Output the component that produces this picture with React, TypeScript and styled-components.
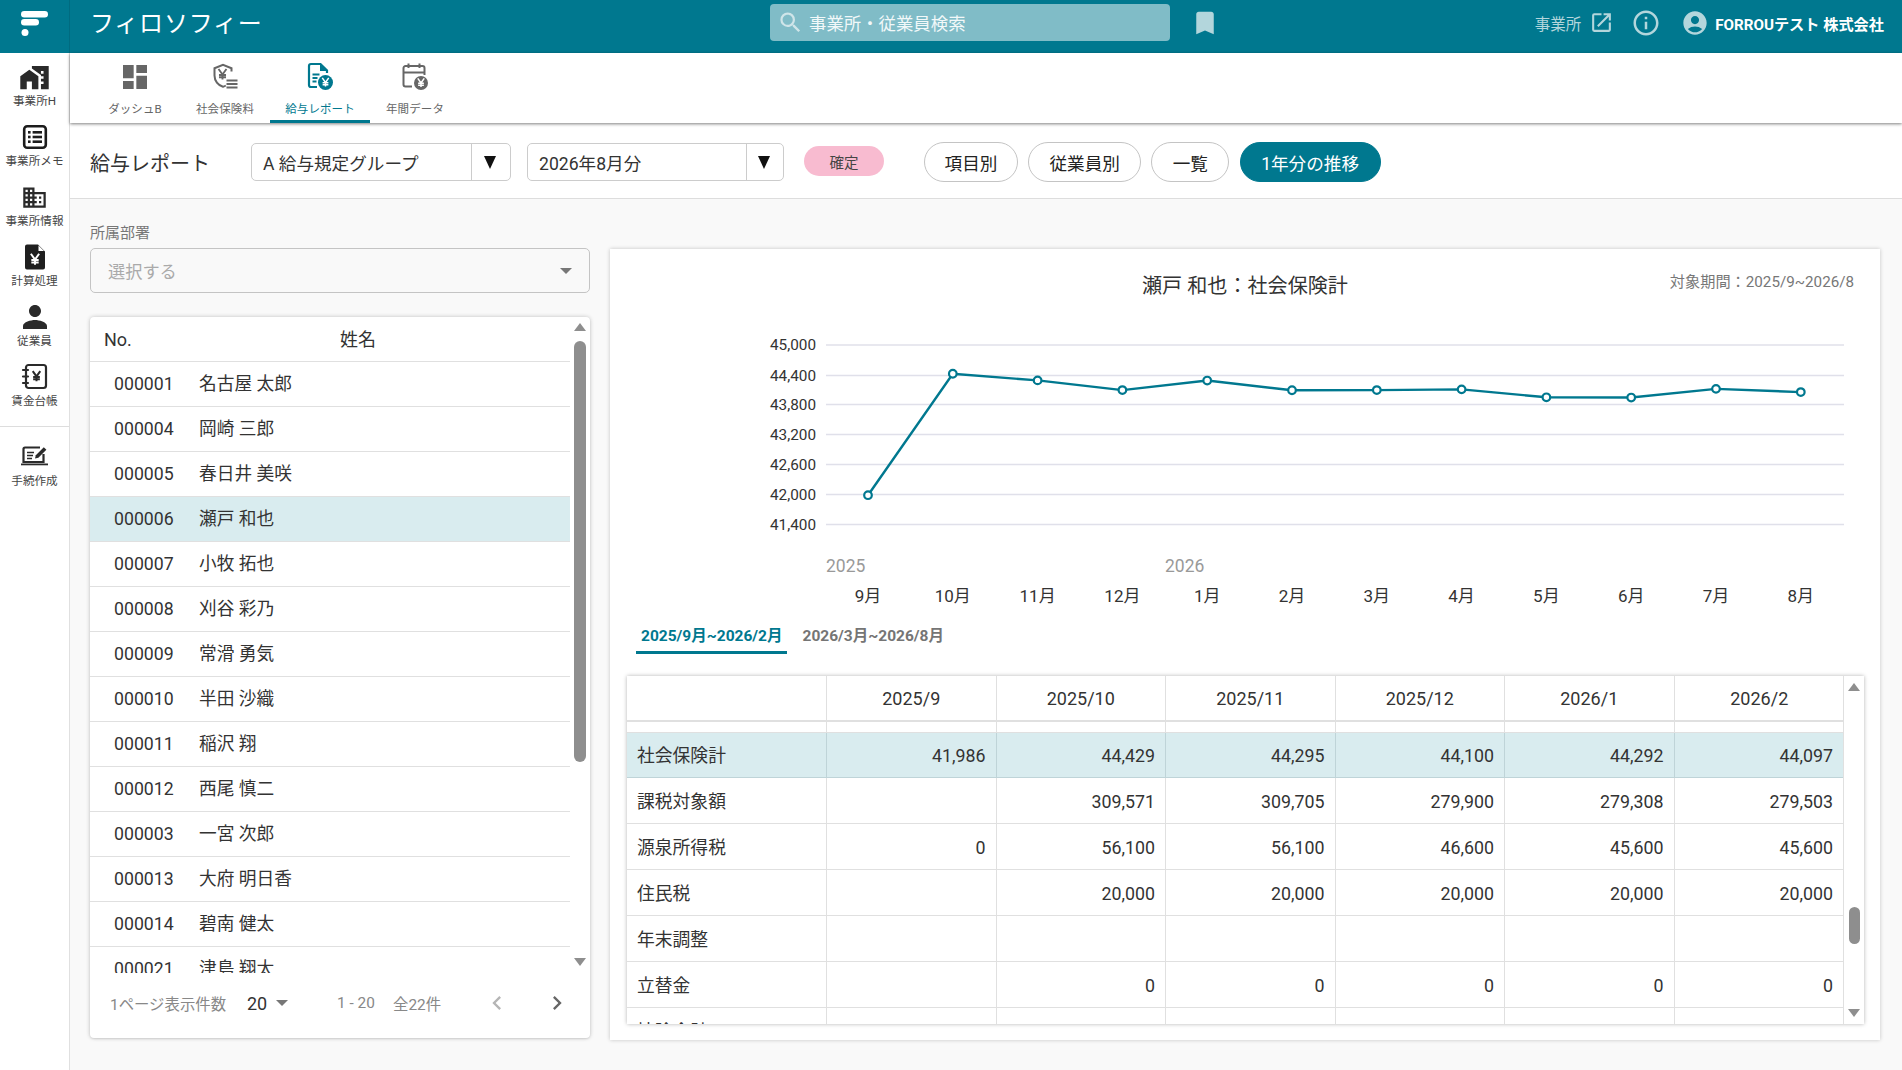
import React from "react";
import styled, { createGlobalStyle } from "styled-components";
import {
  MdHomeWork,
  MdDomain,
  MdPerson,
  MdDashboard,
  MdSearch,
  MdBookmark,
  MdOpenInNew,
  MdInfoOutline,
  MdAccountCircle,
  MdChevronLeft,
  MdChevronRight,
} from "react-icons/md";

const TEAL = "#00788f";

const Global = createGlobalStyle`
  html, body { margin: 0; padding: 0; background: #fff; }
  body { font-family: Roboto, "Noto Sans CJK JP", sans-serif; color: #333; }
  * { box-sizing: border-box; }
`;

const Page = styled.div`
  width: 1902px;
  height: 1070px;
  display: flex;
  flex-direction: column;
  overflow: hidden;
`;

/* ---------- header ---------- */
const Header = styled.header`
  height: 53px;
  flex: none;
  background: ${TEAL};
  display: flex;
  align-items: center;
  color: #fff;
`;
const LogoCell = styled.div`
  width: 70px;
  height: 53px;
  flex: none;
  border-right: 1px solid #006b80;
  display: flex;
  padding: 9px 0 0 18px;
`;
const AppTitle = styled.div`
  width: 700px;
  padding-left: 20px;
  font-size: 24px;
  letter-spacing: 0.8px;
  margin-top: -10px;
  flex: none;
`;
const Search = styled.div`
  width: 400px;
  height: 37px;
  margin-top: -8px;
  flex: none;
  border-radius: 4px;
  background: rgba(255, 255, 255, 0.5);
  display: flex;
  align-items: center;
  gap: 5px;
  padding-left: 7px;
  font-size: 17.4px;
  color: #f1f8f9;
  svg { color: #cfe5e9; }
`;
const Bookmark = styled.div`
  width: 30px;
  margin: -8px 0 0 20px;
  display: flex;
  color: #b3d6dc;
  flex: none;
`;
const HeaderRight = styled.div`
  margin-left: auto;
  display: flex;
  align-items: center;
  padding-right: 18px;
  margin-top: -8px;
`;
const OfficeLink = styled.span`
  font-size: 15.5px;
  color: #b3d6dc;
  margin-right: 8px;
`;
const HeaderIcon = styled.span<{ $ml?: number }>`
  display: flex;
  color: #b3d6dc;
  margin-left: ${(p) => p.$ml ?? 0}px;
`;
const UserName = styled.span`
  font-size: 15.2px;
  font-weight: 700;
  margin-left: 6px;
`;

/* ---------- sidebar ---------- */
const Body = styled.div`
  flex: 1;
  display: flex;
  min-height: 0;
`;
const Sidebar = styled.nav`
  width: 70px;
  flex: none;
  background: #fff;
  border-right: 1px solid #e0e0e0;
  padding-top: 2px;
`;
const SideItem = styled.div`
  height: 60px;
  display: flex;
  flex-direction: column;
  align-items: center;
  color: #2a2a2a;
`;
const SideIcon = styled.div`
  height: 44px;
  flex: none;
  display: flex;
  align-items: center;
  justify-content: center;
`;
const SideLabel = styled.div`
  font-size: 11.6px;
  line-height: 14px;
  margin-top: -5px;
  color: #444;
  white-space: nowrap;
`;
const SideDivider = styled.div`
  height: 1px;
  background: #ddd;
  margin: 11px 0 8px;
`;

/* ---------- main ---------- */
const Main = styled.main`
  flex: 1;
  min-width: 0;
  display: flex;
  flex-direction: column;
`;
const TabBar = styled.div`
  height: 70px;
  flex: none;
  display: flex;
  padding-left: 20px;
  background: #fff;
  box-shadow: 0 1px 3px rgba(0, 0, 0, 0.5);
  position: relative;
  z-index: 2;
`;
const NavTab = styled.div<{ $active?: boolean; $w: number }>`
  width: ${(p) => p.$w}px;
  height: 70px;
  padding-top: 1px;
  display: flex;
  flex-direction: column;
  align-items: center;
  color: ${(p) => (p.$active ? TEAL : "#666")};
  border-bottom: 3px solid ${(p) => (p.$active ? TEAL : "transparent")};
`;
const NavIcon = styled.div`
  height: 46px;
  display: flex;
  align-items: center;
  justify-content: center;
`;
const NavLabel = styled.div`
  font-size: 11.5px;
  line-height: 16px;
  letter-spacing: 0.1px;
  margin-top: 1px;
  white-space: nowrap;
`;

const Toolbar = styled.div`
  height: 76px;
  flex: none;
  background: #fff;
  border-bottom: 1px solid #ddd;
  display: flex;
  align-items: center;
  padding: 3px 0 0 20px;
`;
const PageTitle = styled.h1`
  width: 161px;
  margin: 0;
  font-size: 20px;
  font-weight: 400;
  color: #333;
`;
const ToolSelect = styled.div<{ $w: number; $ml?: number }>`
  width: ${(p) => p.$w}px;
  height: 38px;
  margin-left: ${(p) => p.$ml ?? 0}px;
  border: 1px solid #ccc;
  border-radius: 5px;
  display: flex;
  align-items: center;
  font-size: 17.6px;
  color: #333;
`;
const ToolSelectText = styled.div`
  flex: 1;
  padding-left: 11px;
  white-space: nowrap;
`;
const ToolSelectArrow = styled.div<{ $w: number }>`
  width: ${(p) => p.$w}px;
  height: 36px;
  padding-right: 3px;
  border-left: 1px solid #ccc;
  display: flex;
  align-items: center;
  justify-content: center;
  font-size: 0;
`;
const DownTriangle = styled.span<{ $w: number; $h: number; $c: string }>`
  display: block;
  width: 0;
  height: 0;
  border-left: ${(p) => p.$w / 2}px solid transparent;
  border-right: ${(p) => p.$w / 2}px solid transparent;
  border-top: ${(p) => p.$h}px solid ${(p) => p.$c};
`;
const UpTriangle = styled.span<{ $w: number; $h: number; $c: string }>`
  display: block;
  width: 0;
  height: 0;
  border-left: ${(p) => p.$w / 2}px solid transparent;
  border-right: ${(p) => p.$w / 2}px solid transparent;
  border-bottom: ${(p) => p.$h}px solid ${(p) => p.$c};
`;
const Badge = styled.div`
  width: 80px;
  height: 30px;
  margin: -2px 40px 0 20px;
  border-radius: 15px;
  background: #f8bbd0;
  color: #444;
  font-size: 14.5px;
  display: flex;
  align-items: center;
  justify-content: center;
`;
const PillGroup = styled.div`
  display: flex;
  gap: 10.2px;
`;
const Pill = styled.div<{ $w: number; $on?: boolean }>`
  width: ${(p) => p.$w}px;
  height: 40px;
  border-radius: 20px;
  border: 1px solid ${(p) => (p.$on ? TEAL : "#c4c4c4")};
  background: ${(p) => (p.$on ? TEAL : "#fff")};
  color: ${(p) => (p.$on ? "#fff" : "#222")};
  font-size: 17.6px;
  display: flex;
  align-items: center;
  justify-content: center;
`;

/* ---------- content ---------- */
const Content = styled.div`
  flex: 1;
  min-height: 0;
  background: #f9f9f9;
  display: flex;
  padding-left: 20px;
`;
const LeftCol = styled.div`
  width: 500px;
  flex: none;
  display: flex;
  flex-direction: column;
`;
const FieldLabel = styled.div`
  font-size: 15px;
  color: #777;
  line-height: 20px;
  margin-top: 24px;
`;
const DeptSelect = styled.div`
  height: 45px;
  margin-top: 5px;
  border: 1px solid #c4c4c4;
  border-radius: 5px;
  background: transparent;
  display: flex;
  align-items: center;
  justify-content: space-between;
  padding: 0 17px 0 17px;
  font-size: 17.2px;
  color: #aaa;
`;
const ListCard = styled.div`
  height: 721px;
  margin-top: 24px;
  background: #fff;
  border-radius: 4px;
  box-shadow: 0 0 4px rgba(0, 0, 0, 0.22), 0 1px 2px rgba(0, 0, 0, 0.08);
  display: flex;
  flex-direction: column;
`;
const ListBody = styled.div`
  height: 656px;
  display: flex;
  flex: none;
`;
const ListRows = styled.div`
  flex: 1;
  overflow: hidden;
`;
const ListHead = styled.div`
  height: 45px;
  display: grid;
  grid-template-columns: 236px 1fr;
  padding-left: 14px;
  font-size: 18px;
  line-height: 45px;
  color: #333;
  border-bottom: 1px solid #e0e0e0;
`;
const ListRow = styled.div<{ $sel?: boolean }>`
  height: 45px;
  display: grid;
  grid-template-columns: 85px 1fr;
  padding-left: 24px;
  font-size: 17.7px;
  line-height: 44px;
  color: #333;
  background: ${(p) => (p.$sel ? "#d9ecef" : "#fff")};
  border-bottom: 1px solid #e0e0e0;
`;
const ScrollTrack = styled.div<{ $w: number }>`
  width: ${(p) => p.$w}px;
  flex: none;
  display: flex;
  flex-direction: column;
  align-items: center;
`;
const ScrollArrow = styled.div<{ $top: number }>`
  height: 8px;
  margin-top: ${(p) => p.$top}px;
  display: flex;
  flex: none;
`;
const ScrollThumb = styled.div<{ $top: number; $h: number; $w: number }>`
  width: ${(p) => p.$w}px;
  height: ${(p) => p.$h}px;
  margin-top: ${(p) => p.$top}px;
  border-radius: 6px;
  background: #8e8e8e;
  flex: none;
`;
const Pager = styled.div`
  flex: 1;
  position: relative;
  display: flex;
  align-items: center;
  padding: 0 0 5px 20px;
  font-size: 15.4px;
  color: #888;
`;
const PageSizeLabel = styled.span`
  width: 137px;
  white-space: nowrap;
`;
const PageSize = styled.span`
  width: 90px;
  display: flex;
  align-items: center;
  gap: 9px;
  font-size: 18px;
  color: #333;
`;
const PageRange = styled.span`
  width: 56px;
  white-space: nowrap;
`;
const PageTotal = styled.span`
  width: 80px;
  white-space: nowrap;
`;
const PageBtn = styled.span<{ $c: string; $ml: number }>`
  display: flex;
  color: ${(p) => p.$c};
  margin-left: ${(p) => p.$ml}px;
`;

const Panel = styled.section`
  width: 1270px;
  height: 791px;
  margin: 50px 0 0 20px;
  flex: none;
  background: #fff;
  box-shadow: 0 0 4px rgba(0, 0, 0, 0.22);
  display: flex;
  flex-direction: column;
`;
const PanelHead = styled.div`
  height: 81px;
  flex: none;
  display: grid;
  grid-template-columns: 1fr auto 1fr;
`;
const ChartTitle = styled.h2`
  margin: 23px 0 0;
  font-size: 20.1px;
  line-height: 28px;
  font-weight: 400;
  color: #333;
`;
const Period = styled.div`
  justify-self: end;
  margin-top: 22px;
  padding-right: 26px;
  font-size: 15.2px;
  line-height: 22px;
  color: #777;
`;
const ChartSvg = styled.svg`
  display: block;
  flex: none;
`;
const SubTabs = styled.div`
  height: 34px;
  flex: none;
  display: flex;
  gap: 10px;
  padding-left: 26px;
`;
const SubTab = styled.div<{ $on?: boolean }>`
  padding: 0 5px;
  height: 34px;
  line-height: 32px;
  font-size: 15.5px;
  font-weight: 700;
  white-space: nowrap;
  color: ${(p) => (p.$on ? TEAL : "#757575")};
  border-bottom: 3px solid ${(p) => (p.$on ? TEAL : "transparent")};
`;
const TableCard = styled.div`
  width: 1237px;
  height: 348px;
  margin: 22px 0 0 17px;
  flex: none;
  display: flex;
  background: #fff;
  box-shadow: 0 0 4px rgba(0, 0, 0, 0.3);
`;
const TableBody = styled.div`
  width: 1217px;
  height: 348px;
  overflow: hidden;
  flex: none;
  border-right: 1px solid #e0e0e0;
`;
const COLS = "200px repeat(6, 169.5px)";
const THead = styled.div`
  height: 46px;
  display: grid;
  grid-template-columns: ${COLS};
  border-bottom: 2px solid #e0e0e0;
`;
const TSpacer = styled.div`
  height: 10px;
  display: grid;
  grid-template-columns: ${COLS};
`;
const TRow = styled.div<{ $hl?: boolean }>`
  height: 46px;
  display: grid;
  grid-template-columns: ${COLS};
  line-height: 47px;
  background: ${(p) => (p.$hl ? "#d9ecef" : "#fff")};
  border-bottom: 1px solid ${(p) => (p.$hl ? "#bfd4d8" : "#e0e0e0")};
  ${(p) => (p.$hl ? "border-top: 1px solid #e0e0e0; line-height: 46px;" : "")}
`;
const THCell = styled.div`
  display: flex;
  align-items: center;
  justify-content: center;
  padding-top: 1px;
  font-size: 18px;
  color: #333;
  border-right: 1px solid #e0e0e0;
  &:last-child { border-right: none; }
`;
const GapCell = styled.div`
  border-right: 1px solid #e0e0e0;
  &:last-child { border-right: none; }
`;
const LabelCell = styled.div<{ $hl?: boolean }>`
  padding-left: 10px;
  font-size: 17.8px;
  color: #333;
  border-right: 1px solid ${(p) => (p.$hl ? "#bfd4d8" : "#e0e0e0")};
`;
const NumCell = styled.div<{ $hl?: boolean }>`
  text-align: right;
  padding-right: 10px;
  font-size: 17.8px;
  color: #333;
  border-right: 1px solid ${(p) => (p.$hl ? "#bfd4d8" : "#e0e0e0")};
  &:last-child { border-right: none; padding-right: 11px; }
`;

/* ---------- data ---------- */
const staff: [string, string][] = [
  ["000001", "名古屋 太郎"],
  ["000004", "岡崎 三郎"],
  ["000005", "春日井 美咲"],
  ["000006", "瀬戸 和也"],
  ["000007", "小牧 拓也"],
  ["000008", "刈谷 彩乃"],
  ["000009", "常滑 勇気"],
  ["000010", "半田 沙織"],
  ["000011", "稲沢 翔"],
  ["000012", "西尾 慎二"],
  ["000003", "一宮 次郎"],
  ["000013", "大府 明日香"],
  ["000014", "碧南 健太"],
  ["000021", "津島 翔太"],
];
const months = ["2025/9", "2025/10", "2025/11", "2025/12", "2026/1", "2026/2"];
const rows: { label: string; values: string[]; hl?: boolean }[] = [
  { label: "社会保険計", values: ["41,986", "44,429", "44,295", "44,100", "44,292", "44,097"], hl: true },
  { label: "課税対象額", values: ["", "309,571", "309,705", "279,900", "279,308", "279,503"] },
  { label: "源泉所得税", values: ["0", "56,100", "56,100", "46,600", "45,600", "45,600"] },
  { label: "住民税", values: ["", "20,000", "20,000", "20,000", "20,000", "20,000"] },
  { label: "年末調整", values: ["", "", "", "", "", ""] },
  { label: "立替金", values: ["", "0", "0", "0", "0", "0"] },
  { label: "控除合計", values: ["", "", "", "", "", ""] },
];
const chartValues = [41986, 44429, 44295, 44100, 44292, 44097, 44100, 44115, 43955, 43950, 44125, 44060];
const chartMonths = ["9月", "10月", "11月", "12月", "1月", "2月", "3月", "4月", "5月", "6月", "7月", "8月"];
const ticks: [string, number][] = [
  ["45,000", 15],
  ["44,400", 45.5],
  ["43,800", 74.5],
  ["43,200", 104.5],
  ["42,600", 134.5],
  ["42,000", 164.5],
  ["41,400", 194.5],
];
const ptX = (i: number) => 258 + i * 84.8;
const ptY = (v: number) => 164.5 - (v - 42000) * 0.04972;

/* ---------- icons ---------- */
const Yen = ({ x, y, s = 1, c = "#fff", w = 1.8 }: { x: number; y: number; s?: number; c?: string; w?: number }) => (
  <path
    transform={`translate(${x} ${y}) scale(${s})`}
    d="M-3.6-4.6 0 .4 3.6-4.6M0 .4V5M-3.2.9H3.2M-3.2 3H3.2"
    fill="none"
    stroke={c}
    strokeWidth={w}
  />
);
const Logo = () => (
  <svg width="34" height="30" viewBox="0 0 34 30">
    <rect x="3" y="2" width="27" height="6.5" rx="3.25" fill="#fff" />
    <rect x="3" y="10" width="18" height="6.5" rx="3.25" fill="#fff" />
    <circle cx="7" cy="23.5" r="3.5" fill="#fff" />
  </svg>
);
const MemoIcon = () => (
  <svg width="26" height="26" viewBox="0 0 26 26">
    <rect x="2.2" y="2.2" width="21.6" height="21.6" rx="3" fill="none" stroke="#1c1c1c" strokeWidth="2.6" />
    <g fill="#1c1c1c">
      <rect x="6" y="7" width="2.6" height="2.6" />
      <rect x="6" y="11.7" width="2.6" height="2.6" />
      <rect x="6" y="16.4" width="2.6" height="2.6" />
      <rect x="10.6" y="7" width="9.4" height="2.6" />
      <rect x="10.6" y="11.7" width="9.4" height="2.6" />
      <rect x="10.6" y="16.4" width="9.4" height="2.6" />
    </g>
  </svg>
);
const CalcIcon = () => (
  <svg width="26" height="28" viewBox="0 0 26 28">
    <path d="M3 3.5A2 2 0 0 1 5 1.5H16L23 8.5V24.5a2 2 0 0 1-2 2H5a2 2 0 0 1-2-2Z" fill="#1f1f1f" />
    <path d="M16.5 2.5 22 8H16.5Z" fill="#fff" />
    <Yen x={13} y={16} s={1.15} w={1.7} />
  </svg>
);
const LedgerIcon = () => (
  <svg width="28" height="28" viewBox="0 0 28 28">
    <rect x="5" y="2" width="20" height="23" rx="2.5" fill="none" stroke="#2a2a2a" strokeWidth="2.2" />
    <g stroke="#2a2a2a" strokeWidth="2.2" strokeLinecap="round">
      <path d="M2 7h5M2 13.5h5M2 20h5" />
    </g>
    <Yen x={15.5} y={13} s={1.05} c="#2a2a2a" w={1.9} />
  </svg>
);
const FormIcon = () => (
  <svg width="30" height="26" viewBox="0 0 30 26">
    <path d="M5 3.5h15M5 3.5a1.5 1.5 0 0 0-1.5 1.5V18h20v-8" fill="none" stroke="#2a2a2a" strokeWidth="2.2" />
    <path d="M1 19.5h27v1.8H1Z" fill="#2a2a2a" />
    <path d="M7 8.5h7M7 11.5h6M7 14.5h5" stroke="#2a2a2a" strokeWidth="1.6" />
    <path d="M15 14.5l.8-3.3 8-8 2.6 2.6-8 8Z" fill="#2a2a2a" />
  </svg>
);
const ShieldIcon = () => (
  <svg width="30" height="30" viewBox="0 0 30 30">
    <path
      d="M21.5 9.5V6.2L13 2.8 4.5 6.2v7.4c0 5.2 3.6 9.8 8.5 11.2 1-.3 1.9-.7 2.8-1.3"
      fill="none"
      stroke="#666"
      strokeWidth="2"
    />
    <Yen x={12.5} y={12} s={1.1} c="#666" w={1.7} />
    <path d="M16.5 18.5h11M16.5 22h11M16.5 25.5h11" stroke="#666" strokeWidth="2" />
  </svg>
);
const PayslipIcon = () => (
  <svg width="30" height="30" viewBox="0 0 30 30">
    <path
      d="M12 25H6a2 2 0 0 1-2-2V4a2 2 0 0 1 2-2h9.5L22 8.5V11"
      fill="none"
      stroke={TEAL}
      strokeWidth="2.2"
    />
    <path d="M15 2v7h7" fill={TEAL} />
    <path d="M7.5 12.5h7M7.5 16h5M7.5 19.5h4" stroke={TEAL} strokeWidth="1.9" />
    <circle cx="20.5" cy="20.5" r="7.5" fill={TEAL} />
    <Yen x={20.5} y={20} s={0.9} w={1.7} />
  </svg>
);
const CalendarIcon = () => (
  <svg width="30" height="30" viewBox="0 0 30 30">
    <path
      d="M12 24.5H5.5a2 2 0 0 1-2-2V6a2 2 0 0 1 2-2h17a2 2 0 0 1 2 2v7"
      fill="none"
      stroke="#666"
      strokeWidth="2"
    />
    <path d="M3.5 10.5h21M8.5 1.5v4.5M19.5 1.5v4.5" stroke="#666" strokeWidth="2" />
    <circle cx="21" cy="21" r="7" fill="#666" />
    <Yen x={21} y={20.5} s={0.9} w={1.7} />
  </svg>
);

const sideItems: { label: string; icon: React.ReactNode }[] = [
  { label: "事業所H", icon: <MdHomeWork size={31} /> },
  { label: "事業所メモ", icon: <MemoIcon /> },
  { label: "事業所情報", icon: <MdDomain size={27} /> },
  { label: "計算処理", icon: <CalcIcon /> },
  { label: "従業員", icon: <MdPerson size={36} /> },
  { label: "賃金台帳", icon: <LedgerIcon /> },
];
const navTabs: { label: string; w: number; icon: React.ReactNode; on?: boolean }[] = [
  { label: "ダッシュB", w: 90, icon: <MdDashboard size={32} /> },
  { label: "社会保険料", w: 90, icon: <ShieldIcon /> },
  { label: "給与レポート", w: 100, icon: <PayslipIcon />, on: true },
  { label: "年間データ", w: 90, icon: <CalendarIcon /> },
];

export default function App() {
  const line = chartValues.map((v, i) => `${ptX(i)},${ptY(v)}`).join(" ");
  return (
    <Page>
      <Global />
      <Header>
        <LogoCell>
          <Logo />
        </LogoCell>
        <AppTitle>フィロソフィー</AppTitle>
        <Search>
          <MdSearch size={27} />
          事業所・従業員検索
        </Search>
        <Bookmark>
          <MdBookmark size={30} />
        </Bookmark>
        <HeaderRight>
          <OfficeLink>事業所</OfficeLink>
          <HeaderIcon>
            <MdOpenInNew size={25} />
          </HeaderIcon>
          <HeaderIcon $ml={17}>
            <MdInfoOutline size={30} />
          </HeaderIcon>
          <HeaderIcon $ml={20}>
            <MdAccountCircle size={28} />
          </HeaderIcon>
          <UserName>FORROUテスト 株式会社</UserName>
        </HeaderRight>
      </Header>
      <Body>
        <Sidebar>
          {sideItems.map((s) => (
            <SideItem key={s.label}>
              <SideIcon>{s.icon}</SideIcon>
              <SideLabel>{s.label}</SideLabel>
            </SideItem>
          ))}
          <SideDivider />
          <SideItem>
            <SideIcon>
              <FormIcon />
            </SideIcon>
            <SideLabel>手続作成</SideLabel>
          </SideItem>
        </Sidebar>
        <Main>
          <TabBar>
            {navTabs.map((t) => (
              <NavTab key={t.label} $w={t.w} $active={t.on}>
                <NavIcon>{t.icon}</NavIcon>
                <NavLabel>{t.label}</NavLabel>
              </NavTab>
            ))}
          </TabBar>
          <Toolbar>
            <PageTitle>給与レポート</PageTitle>
            <ToolSelect $w={260}>
              <ToolSelectText>A 給与規定グループ</ToolSelectText>
              <ToolSelectArrow $w={39}>
                <DownTriangle $w={13} $h={13} $c="#111" />
              </ToolSelectArrow>
            </ToolSelect>
            <ToolSelect $w={257} $ml={16}>
              <ToolSelectText>2026年8月分</ToolSelectText>
              <ToolSelectArrow $w={37}>
                <DownTriangle $w={13} $h={13} $c="#111" />
              </ToolSelectArrow>
            </ToolSelect>
            <Badge>確定</Badge>
            <PillGroup>
              <Pill $w={94}>項目別</Pill>
              <Pill $w={113}>従業員別</Pill>
              <Pill $w={78}>一覧</Pill>
              <Pill $w={141} $on>
                1年分の推移
              </Pill>
            </PillGroup>
          </Toolbar>
          <Content>
            <LeftCol>
              <FieldLabel>所属部署</FieldLabel>
              <DeptSelect>
                選択する
                <DownTriangle $w={13} $h={6.5} $c="#777" />
              </DeptSelect>
              <ListCard>
                <ListBody>
                  <ListRows>
                    <ListHead>
                      <span>No.</span>
                      <span>姓名</span>
                    </ListHead>
                    {staff.map(([id, name]) => (
                      <ListRow key={id} $sel={id === "000006"}>
                        <span>{id}</span>
                        <span>{name}</span>
                      </ListRow>
                    ))}
                  </ListRows>
                  <ScrollTrack $w={20}>
                    <ScrollArrow $top={6}>
                      <UpTriangle $w={13} $h={8} $c="#8e8e8e" />
                    </ScrollArrow>
                    <ScrollThumb $top={10} $h={421} $w={12} />
                    <ScrollArrow $top={196}>
                      <DownTriangle $w={13} $h={8} $c="#8e8e8e" />
                    </ScrollArrow>
                  </ScrollTrack>
                </ListBody>
                <Pager>
                  <PageSizeLabel>1ページ表示件数</PageSizeLabel>
                  <PageSize>
                    20
                    <DownTriangle $w={12} $h={6} $c="#777" />
                  </PageSize>
                  <PageRange>1 - 20</PageRange>
                  <PageTotal>全22件</PageTotal>
                  <PageBtn $c="#b5b5b5" $ml={10}>
                    <MdChevronLeft size={28} />
                  </PageBtn>
                  <PageBtn $c="#666" $ml={32}>
                    <MdChevronRight size={28} />
                  </PageBtn>
                </Pager>
              </ListCard>
            </LeftCol>
            <Panel>
              <PanelHead>
                <span />
                <ChartTitle>瀬戸 和也：社会保険計</ChartTitle>
                <Period>対象期間：2025/9~2026/8</Period>
              </PanelHead>
              <ChartSvg width="1270" height="290" viewBox="0 0 1270 290">
                {ticks.map(([t, y]) => (
                  <g key={t}>
                    <line x1="216" x2="1234" y1={y} y2={y} stroke="#e0e0ea" strokeWidth="1.4" />
                    <text x="206" y={y + 5.2} textAnchor="end" fontSize="15.3" fill="#333">
                      {t}
                    </text>
                  </g>
                ))}
                <polyline points={line} fill="none" stroke={TEAL} strokeWidth="2.4" />
                {chartValues.map((v, i) => (
                  <circle key={i} cx={ptX(i)} cy={ptY(v)} r="3.8" fill="#fff" stroke={TEAL} strokeWidth="2.2" />
                ))}
                <text x="216" y="241.5" fontSize="17.5" fill="#999">
                  2025
                </text>
                <text x="555" y="241.5" fontSize="17.5" fill="#999">
                  2026
                </text>
                {chartMonths.map((m, i) => (
                  <text key={m} x={ptX(i)} y="272" textAnchor="middle" fontSize="17" fill="#333">
                    {m}
                  </text>
                ))}
              </ChartSvg>
              <SubTabs>
                <SubTab $on>2025/9月~2026/2月</SubTab>
                <SubTab>2026/3月~2026/8月</SubTab>
              </SubTabs>
              <TableCard>
                <TableBody>
                  <THead>
                    <THCell />
                    {months.map((m) => (
                      <THCell key={m}>{m}</THCell>
                    ))}
                  </THead>
                  <TSpacer>
                    {["", ...months].map((m) => (
                      <GapCell key={m} />
                    ))}
                  </TSpacer>
                  {rows.map((r) => (
                    <TRow key={r.label} $hl={r.hl}>
                      <LabelCell $hl={r.hl}>{r.label}</LabelCell>
                      {r.values.map((v, i) => (
                        <NumCell key={i} $hl={r.hl}>
                          {v}
                        </NumCell>
                      ))}
                    </TRow>
                  ))}
                </TableBody>
                <ScrollTrack $w={20}>
                  <ScrollArrow $top={7}>
                    <UpTriangle $w={13} $h={8} $c="#8e8e8e" />
                  </ScrollArrow>
                  <ScrollThumb $top={216} $h={37} $w={11} />
                  <ScrollArrow $top={65}>
                    <DownTriangle $w={13} $h={8} $c="#8e8e8e" />
                  </ScrollArrow>
                </ScrollTrack>
              </TableCard>
            </Panel>
          </Content>
        </Main>
      </Body>
    </Page>
  );
}
